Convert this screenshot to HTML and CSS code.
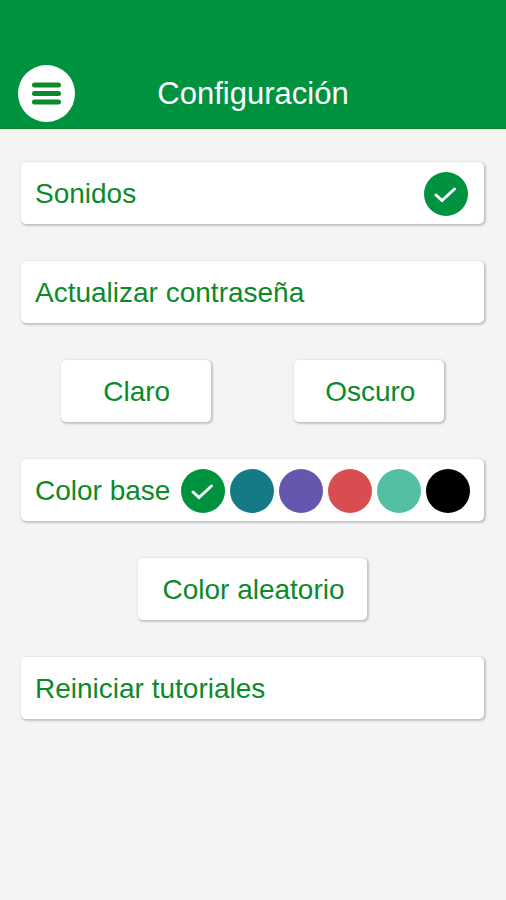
FILE: index.html
```html
<!DOCTYPE html>
<html lang="es">
<head>
<meta charset="UTF-8" />
<meta name="viewport" content="width=device-width, initial-scale=1" />
<title>Configuración</title>
<link rel="stylesheet" href="styles.css">
</head>
<body>

<header class="topbar">
  <button class="menu" type="button" aria-label="Menú">
    <svg width="29" height="23" viewBox="0 0 29 23" aria-hidden="true">
      <path d="M2.5 3H26.5M2.5 11.5H26.5M2.5 20H26.5" />
    </svg>
  </button>
  <h1>Configuración</h1>
</header>

<main class="settings">
  <div class="card sound">
    <label for="sonidos">Sonidos</label>
    <span class="dot">
      <input type="checkbox" id="sonidos" checked>
      <svg viewBox="0 0 44 44" aria-hidden="true"><path d="M12 23L18 28.5L30.5 17" /></svg>
    </span>
  </div>

  <button class="card" type="button">Actualizar contraseña</button>

  <!-- Tema -->
  <div class="themes">
    <button class="card small" type="button">Claro</button>
    <button class="card small" type="button">Oscuro</button>
  </div>

  <div class="card colors" role="radiogroup" aria-labelledby="color-base">
    <span id="color-base">Color base</span>
    <div class="swatches">
      <span class="dot">
        <input type="radio" name="color" class="green" aria-label="Verde" checked>
        <svg viewBox="0 0 44 44" aria-hidden="true"><path d="M12 23L18 28.5L30.5 17" /></svg>
      </span>
      <span class="dot">
        <input type="radio" name="color" class="teal" aria-label="Azul verdoso">
        <svg viewBox="0 0 44 44" aria-hidden="true"><path d="M12 23L18 28.5L30.5 17" /></svg>
      </span>
      <span class="dot">
        <input type="radio" name="color" class="purple" aria-label="Morado">
        <svg viewBox="0 0 44 44" aria-hidden="true"><path d="M12 23L18 28.5L30.5 17" /></svg>
      </span>
      <span class="dot">
        <input type="radio" name="color" class="red" aria-label="Rojo">
        <svg viewBox="0 0 44 44" aria-hidden="true"><path d="M12 23L18 28.5L30.5 17" /></svg>
      </span>
      <span class="dot">
        <input type="radio" name="color" class="mint" aria-label="Menta">
        <svg viewBox="0 0 44 44" aria-hidden="true"><path d="M12 23L18 28.5L30.5 17" /></svg>
      </span>
      <span class="dot">
        <input type="radio" name="color" class="black" aria-label="Negro">
        <svg viewBox="0 0 44 44" aria-hidden="true"><path d="M12 23L18 28.5L30.5 17" /></svg>
      </span>
    </div>
  </div>

  <button class="card random" type="button">Color aleatorio</button>

  <button class="card" type="button">Reiniciar tutoriales</button>
</main>

</body>
</html>
```
FILE: styles.css
```css
* {
  box-sizing: border-box;
}
body {
  margin: 0;
  background: #f4f4f4;
  color: #0b8a2a;
  font-family: "Liberation Sans", Arial, sans-serif;
  font-size: 28px;
  line-height: 32px;
}
.topbar {
  display: grid;
  grid-template-columns: 57px 1fr 57px;
  align-items: center;
  padding: 65px 18px 6px;
  background: #00933f;
  border-bottom: 1px solid #0b8a2a;
}
.topbar h1 {
  margin: 0;
  color: #fff;
  font-size: 31px;
  font-weight: normal;
  text-align: center;
}
.menu {
  display: grid;
  place-items: center;
  height: 57px;
  padding: 0;
  border: 0;
  border-radius: 50%;
  background: #fff;
  cursor: pointer;
}
.menu path {
  stroke: #0b8a2a;
  stroke-width: 5;
  stroke-linecap: round;
}
.settings {
  display: flex;
  flex-direction: column;
  gap: 37px;
  padding: 33px 22px 37px 21px;
}
.card {
  display: flex;
  align-items: center;
  min-height: 62px;
  padding: 2px 14px 0;
  border: 0;
  border-radius: 5px;
  background: #fff;
  box-shadow: 1px 1px 2px 1px #c4c4c4;
  color: inherit;
  font: inherit;
  text-align: left;
}
button.card {
  cursor: pointer;
}
.sound,
.colors {
  justify-content: space-between;
}
.sound {
  padding-right: 16px;
}
.themes {
  display: grid;
  grid-template-columns: 1fr 1fr;
  gap: 4px;
  justify-items: center;
}
.small {
  justify-content: center;
  width: 150px;
  padding: 2px 12px 0 14px;
}
.random {
  align-self: center;
  justify-content: center;
  padding: 2px 22px 0 24px;
}
.swatches {
  display: flex;
  gap: 5px;
}
/* La marca se apila sobre el control */
.dot {
  display: grid;
  width: 44px;
  height: 44px;
}
.dot > * {
  grid-area: 1 / 1;
}
.dot input {
  appearance: none;
  width: 44px;
  height: 44px;
  margin: 0;
  border-radius: 50%;
  background: #00933f;
  cursor: pointer;
}
.dot svg {
  visibility: hidden;
  pointer-events: none;
}
.dot input:checked + svg {
  visibility: visible;
}
.dot path {
  fill: none;
  stroke: #fff;
  stroke-width: 3;
  stroke-linecap: round;
}
.dot .teal {
  background: #147a86;
}
.dot .purple {
  background: #6557ae;
}
.dot .red {
  background: #d94c4f;
}
.dot .mint {
  background: #54c0a3;
}
.dot .black {
  background: #000;
}
```
